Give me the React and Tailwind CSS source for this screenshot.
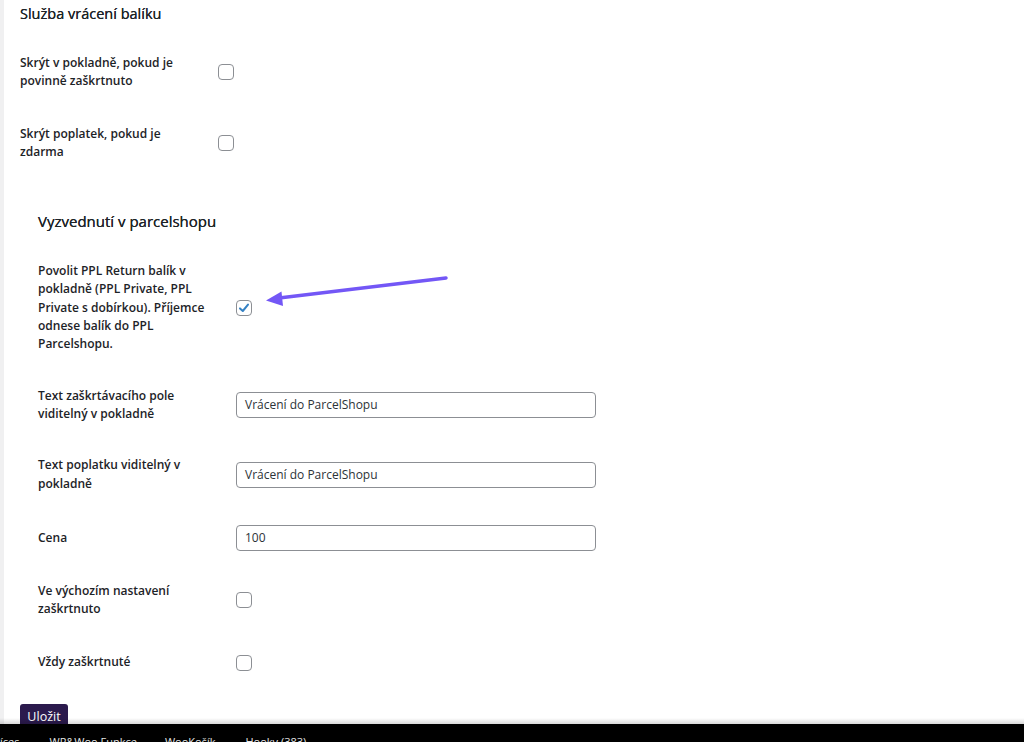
import React from "react";

const font = { fontFamily: '"Open Sans", "Noto Sans", sans-serif' };

function Checkbox({ checked }) {
  return (
    <div className="w-[16px] h-[16px] rounded-[4px] border border-[#8c8f94] bg-white flex items-center justify-center shrink-0">
      {checked && (
        <svg width="14" height="14" viewBox="0 0 14 14">
          <path d="M3 7.4 L5.8 10 L11 3.6" fill="none" stroke="#3582c4" strokeWidth="2" strokeLinecap="round" strokeLinejoin="round" />
        </svg>
      )}
    </div>
  );
}

function TextInput({ value }) {
  return (
    <div className="w-[360px] h-[26px] rounded-[4px] border border-[#8c8f94] bg-white flex items-center px-[8px] text-[12px] text-[#2c3338]">
      {value}
    </div>
  );
}

function Row({ label, children, pad = "py-[17px]" }) {
  return (
    <div className={`flex items-center ${pad}`}>
      <div className="w-[198px] shrink-0 text-[12px] leading-[18.3px] font-semibold text-[#1d2327]">{label}</div>
      {children}
    </div>
  );
}

export default function App() {
  return (
    <div className="relative w-[1024px] h-[742px] overflow-hidden bg-white flex" style={font}>
      <div className="w-[4px] bg-[#f0f0f1] shrink-0" />
      <main className="flex-1 pl-[16px]">
        {/* section headings */}
        <h2 className="text-[14.5px] font-medium text-[#1d2327] leading-[20px] pt-[4px] mb-[13px] [text-shadow:0_0_0.3px_#1d2327]">Služba vrácení balíku</h2>

        <Row label={<>Skrýt v pokladně, pokud je<br />povinně zaškrtnuto</>}>
          <Checkbox />
        </Row>
        <Row label={<>Skrýt poplatek, pokud je<br />zdarma</>}>
          <Checkbox />
        </Row>

        <section className="pl-[18px]">
          <h3 className="text-[15px] font-medium text-[#1d2327] leading-[20px] mt-[33px] mb-[14px] [text-shadow:0_0_0.3px_#1d2327]">Vyzvednutí v parcelshopu</h3>

          <Row label={<>Povolit PPL Return balík v<br />pokladně (PPL Private, PPL<br />Private s dobírkou). Příjemce<br />odnese balík do PPL<br />Parcelshopu.</>}>
            <Checkbox checked />
          </Row>
          <Row label={<>Text zaškrtávacího pole<br />viditelný v pokladně</>} pad="py-[16px]">
            <TextInput value="Vrácení do ParcelShopu" />
          </Row>
          <Row label={<>Text poplatku viditelný v<br />pokladně</>}>
            <TextInput value="Vrácení do ParcelShopu" />
          </Row>
          <Row label="Cena" pad="py-[15px]">
            <TextInput value="100" />
          </Row>
          <Row label={<>Ve výchozím nastavení<br />zaškrtnuto</>} pad="pt-[16px] pb-[18px]">
            <Checkbox />
          </Row>
          <Row label="Vždy zaškrtnuté">
            <Checkbox />
          </Row>
        </section>

        <button className="mt-[15px] w-[48px] h-[30px] rounded-[3px] bg-[#2b1a4d] text-white text-[12.5px] leading-[26px] pb-[4px]">Uložit</button>
      </main>

      <svg className="absolute left-0 top-0 pointer-events-none" width="1024" height="742">
        <line x1="446" y1="278" x2="279" y2="298" stroke="#7357f6" strokeWidth="3.5" strokeLinecap="round" />
        <polygon points="266,300.5 283,306 281.5,291.5" fill="#7357f6" />
      </svg>

      <div className="absolute left-0 right-0 bottom-[18px] h-[6px] bg-gradient-to-b from-transparent to-black/15" />
      <div className="absolute left-0 right-0 bottom-0 h-[18px] bg-black overflow-hidden flex items-start pt-[10px] text-[11px] leading-[16px] text-[#e5e5e5] whitespace-nowrap">
        <span className="ml-[0px]">íces</span>
        <span className="ml-[30px]">WP&amp;Woo Funkce</span>
        <span className="ml-[28px]">WooKošík</span>
        <span className="ml-[30px]">Hooky (383)</span>
      </div>
    </div>
  );
}
